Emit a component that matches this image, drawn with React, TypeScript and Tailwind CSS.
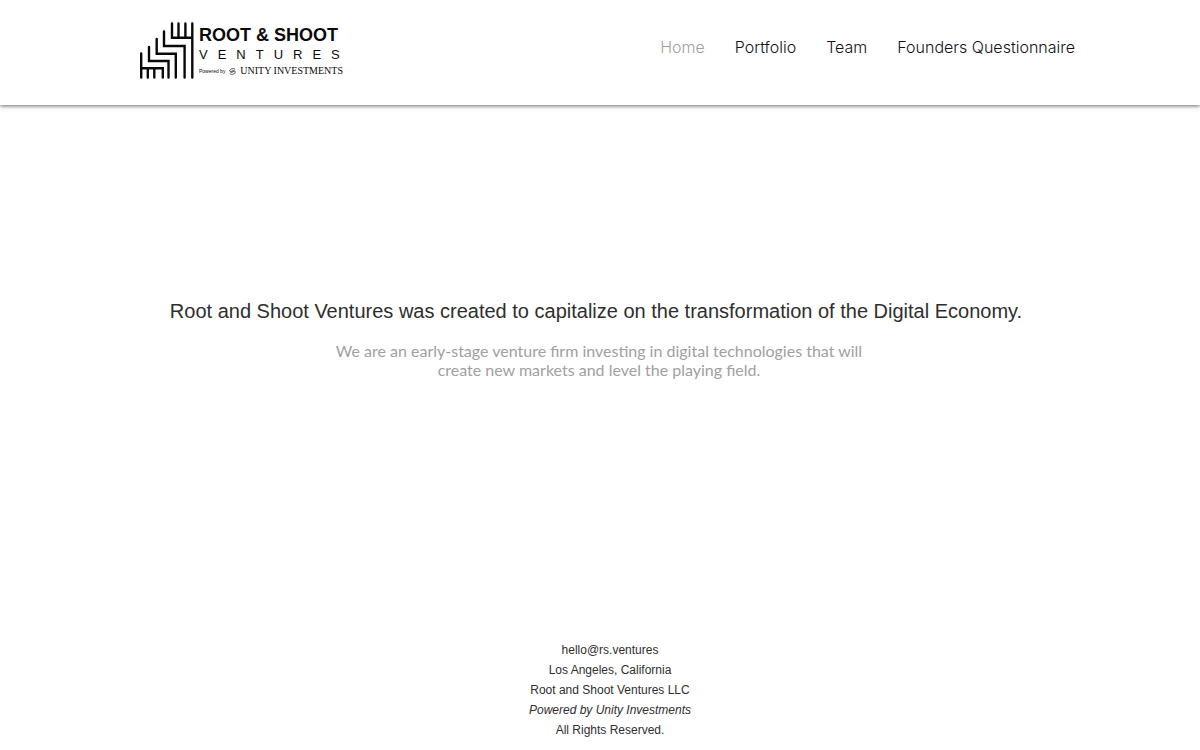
import clsx from 'clsx';

const navItems = [
  { label: 'Home', href: '#home', active: true },
  { label: 'Portfolio', href: '#portfolio' },
  { label: 'Team', href: '#team' },
  { label: 'Founders Questionnaire', href: '#founders' },
];

function LogoMark() {
  return (
    <svg width="56" height="58" viewBox="0 0 56 58" fill="none" stroke="#0a0a0a" strokeWidth="2.4" strokeLinecap="round" aria-hidden="true">
      <path d="M2.2 32.500v24M2.2 47.3h21.6v9.200M8.8 47.3v9.200M15.3 47.3v9.200" />
      <path d="M10 26v14h19.5v16.500" />
      <path d="M17.7 18v14.700h19.1v23.800" />
      <path d="M25 10.500v14.500h20.6v31.500" />
      <path d="M33 2.500v14.200h20.300M39.500 2.500v14.200M46.400 2.500v14.200M53.300 2.500v54" />
    </svg>
  );
}

function UnityIcon() {
  return (
    <svg width="9" height="9" viewBox="0 0 9 9" fill="none" stroke="#222" strokeWidth="1" aria-hidden="true">
      <path d="M7.900 1.500C5.500-.3 1.500.9.900 3.500c-.2 1.200 1.100 1.200 2.300.8L7 2.900" />
      <path d="M1.200 7.300c2.300 1.900 6.500.6 7-2.200.2-1-1-1.100-2.200-.7L2.200 5.900" />
    </svg>
  );
}

function Logo() {
  return (
    <a href="#home" className="flex gap-1 text-[#0a0a0a]">
      <LogoMark />
      <div className="flex w-36 flex-col whitespace-nowrap pt-1">
        <span className="text-[18px] leading-5 font-bold">ROOT &amp; SHOOT</span>
        <span className="text-[13px] leading-5 tracking-[10px]">VENTURES</span>
        <div className="flex items-center gap-1 leading-3">
          <span className="text-[5px]">Powered by</span>
          <UnityIcon />
          <span className="font-['Liberation_Serif',serif] text-[10px]">UNITY INVESTMENTS</span>
        </div>
      </div>
    </a>
  );
}

export default function App() {
  return (
    <div className="flex min-h-screen flex-col bg-white font-['Liberation_Sans',Arial,sans-serif] text-[#2f2e2e]">
      <header className="bg-white shadow-[0_1px_4px_rgba(0,0,0,0.6)]">
        <div className="mx-auto flex h-[105px] max-w-[980px] items-start justify-between pr-[15px] pl-[29px]">
          <div className="pt-[21px]">
            <Logo />
          </div>
          <nav className="flex gap-[30px] pt-[35px] font-['Inter',sans-serif] text-[16px] leading-6 font-light">
            {navItems.map((item) => (
              <a
                key={item.label}
                href={item.href}
                className={clsx(item.active ? 'text-[#a0a0a0]' : 'text-[#111118]')}
              >
                {item.label}
              </a>
            ))}
          </nav>
        </div>
      </header>

      <main className="flex grow flex-col items-center pt-48 text-center">
        <h1 className="pr-2 text-[20px] leading-7">
          Root and Shoot Ventures was created to capitalize on the transformation of the Digital Economy.
        </h1>
        <p className="mt-4 max-w-[560px] pr-0.5 font-['Lato',sans-serif] text-[16px] leading-[19px] text-[#a0a09f]">
          We are an early-stage venture firm investing in digital technologies that will
          <br />
          create new markets and level the playing field.
        </p>
      </main>

      <footer className="pb-2.5 pl-5 text-center text-[12px] leading-5">
        <p><a href="mailto:hello@rs.ventures">hello@rs.ventures</a></p>
        <p>Los Angeles, California</p>
        <p>Root and Shoot Ventures LLC</p>
        <p className="italic">Powered by Unity Investments</p>
        <p>All Rights Reserved.</p>
      </footer>
    </div>
  );
}
